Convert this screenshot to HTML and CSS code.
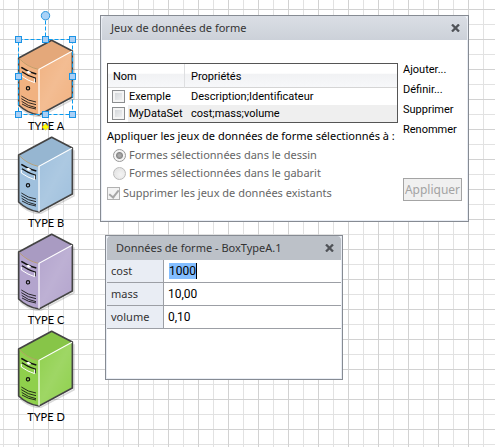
FILE: index.html
```html
<!DOCTYPE html>
<html lang="fr">
<head>
<meta charset="utf-8">
<meta name="viewport" content="width=device-width, initial-scale=1">
<title>Jeux de données de forme</title>
<link rel="stylesheet" href="styles.css">
</head>
<body>
<svg class="defs" aria-hidden="true">
  <defs>
    <linearGradient id="shine" x1="0" y1="0" x2="1" y2="1">
      <stop offset="0" stop-color="#fff" stop-opacity="0"/>
      <stop offset=".5" stop-color="#fff" stop-opacity=".14"/>
      <stop offset="1" stop-color="#fff" stop-opacity="0"/>
    </linearGradient>
    <symbol id="tower" viewBox="51 33 174 234">
      <path d="M60 238Q86 264 120 266L222 212V76" fill="none" stroke="#000" stroke-opacity=".15" stroke-width="5"/>
      <path d="M155 37L217 69V207L117 261Q82 256 56 231V90Z" fill="currentColor" stroke="#444" stroke-width="5" stroke-linejoin="round"/>
      <path d="M155 39L215 70L117 124Q84 117 58 91Z" fill="#000" fill-opacity=".05"/>
      <path d="M117 125L215 71V206L117 259Z" fill="url(#shine)"/>
      <path class="crest" d="M58 92Q82 117 115 124" fill="none" stroke-width="2.5"/>
      <path d="M117 260V124L216 70" fill="none" stroke="#fff" stroke-width="3.5"/>
      <path d="M64 118Q84 132 109 138" fill="none" stroke="#111" stroke-width="5"/>
      <path d="M78 131L86 128L94 135L85 137Z" fill="#fff"/>
      <path d="M66 131Q84 144 106 150V163" fill="none" stroke="#111" stroke-width="3.5"/>
      <path d="M64 135V144Q84 158 104 164V152" fill="none" stroke="#fff" stroke-width="3"/>
      <circle cx="84" cy="181" r="5" fill="none" stroke="#111" stroke-width="3.5"/>
      <path d="M64 204Q84 219 108 222M64 212Q84 227 108 230M65 220Q84 235 108 239M66 228Q84 240 108 243" fill="none" stroke="#111" stroke-width="2.6"/>
    </symbol>
    <symbol id="cross" viewBox="0 0 9 8">
      <path d="M1 .5L8 7.500M8 .5L1 7.500" fill="none" stroke="#505358" stroke-width="2.3"/>
    </symbol>
  </defs>
</svg>
<main class="canvas">
  <div class="shapes">
    <figure class="shape orange">
      <svg class="tower"><use href="#tower"/></svg>
      <figcaption>TYPE A</figcaption>
      <svg class="selection" viewBox="0 0 64 121" aria-hidden="true">
        <path d="M32 10V28M5 29H59V104H5Z" fill="none" stroke="#0a9cf0" stroke-width="1" stroke-dasharray="4 2" transform="translate(-.5 -.5)"/>
        <circle cx="31.500" cy="4.700" r="4.200" fill="#a9d2f7" stroke="#2a96de"/>
        <g fill="#a9cff5" stroke="#1a94e6">
          <rect x="1.500" y="25.500" width="6" height="6"/><rect x="28.500" y="25.500" width="6" height="6"/><rect x="55.500" y="25.500" width="6" height="6"/>
          <rect x="1.500" y="62.500" width="6" height="6"/><rect x="55.500" y="62.500" width="6" height="6"/>
          <rect x="1.500" y="100.500" width="6" height="6"/><rect x="28.500" y="100.500" width="6" height="6"/><rect x="55.500" y="100.500" width="6" height="6"/>
        </g>
        <path d="M31.500 113L35 116L31.500 119L28 116Z" fill="#ff0" stroke="#c8c800" stroke-width=".5"/>
      </svg>
    </figure>
    <figure class="shape blue"><svg class="tower"><use href="#tower"/></svg><figcaption>TYPE B</figcaption></figure>
    <figure class="shape violet"><svg class="tower"><use href="#tower"/></svg><figcaption>TYPE C</figcaption></figure>
    <figure class="shape green"><svg class="tower"><use href="#tower"/></svg><figcaption>TYPE D</figcaption></figure>
  </div>
  <div class="windows">
    <section class="window">
      <header class="titlebar">
        <h2>Jeux de données de forme</h2>
        <button class="close" type="button" aria-label="Fermer"><svg><use href="#cross"/></svg></button>
      </header>
      <form class="sets">
        <div class="sets-main">
          <table class="list">
            <thead><tr><th class="name">Nom</th><th>Propriétés</th></tr></thead>
            <tbody>
              <tr><td class="name"><label><input class="box" type="checkbox"><span>Exemple</span></label></td><td>Description;Identificateur</td></tr>
              <tr class="alt"><td class="name"><label><input class="box" type="checkbox"><span>MyDataSet</span></label></td><td>cost;mass;volume</td></tr>
            </tbody>
          </table>
          <fieldset class="apply">
            <legend>Appliquer les jeux de données de forme sélectionnés à :</legend>
            <label class="option"><input class="radio" type="radio" name="scope" checked disabled>Formes sélectionnées dans le dessin</label>
            <label class="option"><input class="radio" type="radio" name="scope" disabled>Formes sélectionnées dans le gabarit</label>
          </fieldset>
          <label class="remove"><input class="box" type="checkbox" checked disabled>Supprimer les jeux de données existants</label>
        </div>
        <div class="actions">
          <a href="#">Ajouter...</a>
          <a href="#">Définir...</a>
          <a href="#">Supprimer</a>
          <a href="#">Renommer</a>
          <button class="submit" type="button" disabled>Appliquer</button>
        </div>
      </form>
    </section>
    <section class="window data">
      <header class="titlebar">
        <h2>Données de forme - BoxTypeA.1</h2>
        <button class="close" type="button" aria-label="Fermer"><svg><use href="#cross"/></svg></button>
      </header>
      <form class="fields">
        <div class="field"><label for="cost">cost</label><div class="value"><input class="selected" id="cost" value="1000"></div></div>
        <div class="field"><label for="mass">mass</label><div class="value"><input id="mass" value="10,00"></div></div>
        <div class="field"><label for="volume">volume</label><div class="value"><input id="volume" value="0,10"></div></div>
      </form>
    </section>
  </div>
</main>
</body>
</html>
```
FILE: styles.css
```css
* { box-sizing: border-box; }

body {
  margin: 0;
  min-height: 100vh;
  background-color: #fff;
  background-image:
    linear-gradient(90deg, #d2d2d2 1px, transparent 1px),
    linear-gradient(#d2d2d2 1px, transparent 1px),
    linear-gradient(90deg, #e2e2e2 1px, transparent 1px),
    linear-gradient(#e2e2e2 1px, transparent 1px);
  background-size: 30px 30px;
  background-position: 18px 9px, 18px 9px, 3px 24px, 3px 24px;
  color: #000;
  font: 11px/16px "Noto Sans", sans-serif;
}

.defs { position: absolute; width: 0; height: 0; }

.canvas { display: flex; padding-right: 26px; }

.shapes { flex: 0 0 100px; padding: 39px 0 0 17px; }

.shape {
  position: relative;
  width: 58px;
  height: 97px;
  margin: 0;
  text-align: center;
}
.tower { display: block; width: 58px; height: 78px; }
.shape figcaption { padding-top: 1px; color: #000; font: 11px/16px Lato, sans-serif; }
.orange { color: #f1b281; }
.blue { color: #9fc0dd; }
.violet { color: #b3a4cd; }
.green { color: #8fd04c; }
.crest { stroke: #b79a68; }

.selection { position: absolute; left: -3px; top: -28px; width: 64px; height: 121px; }

.windows { flex: 1; min-width: 0; padding-top: 15px; }

.window {
  border: 1px solid #868b93;
  background: #fff;
  box-shadow: inset 0 0 0 1px #e9edf4;
}

.titlebar {
  display: flex;
  align-items: center;
  justify-content: space-between;
  height: 24px;
  margin: 0 1px;
  padding: 0 7px 0 9px;
  border-radius: 4px 4px 0 0;
  background: linear-gradient(#dadee5, #ccd1d9);
}
.titlebar h2 { margin: 0; color: #333; font-size: 11px; font-weight: 400; }
.close { display: flex; padding: 0; border: 0; background: none; }
.close svg { width: 9px; height: 8px; }

.sets {
  display: flex;
  gap: 5px;
  padding: 20px 6px;
}
.sets-main { flex: 1; min-width: 0; padding-top: 3px; }

.list {
  width: 100%;
  border: 1px solid #555;
  border-spacing: 0;
  background: #fff;
  font: 11px/16px Roboto, sans-serif;
}
.list th {
  height: 24px;
  padding: 2px 6px 0;
  border-bottom: 1px solid #d5d5d5;
  background: linear-gradient(#fff 40%, #f1f2f4 45%, #f7f8fa);
  font-weight: 400;
  text-align: left;
}
.list .name { width: 77px; }
.list th.name { padding-left: 5px; border-right: 1px solid #dedfe1; }
.list td { height: 17px; padding: 0 6px; }
.list td.name { padding: 0 0 0 4px; }
.list label { display: flex; align-items: center; gap: 4px; }
.list .alt td { background: #efefef; }
.list .alt .name { background: linear-gradient(90deg, #fff 20px, #efefef 20px); }

.box {
  appearance: none;
  flex: none;
  width: 13px;
  height: 13px;
  margin: 0;
  border: 1px solid #8b8d8f;
  background: linear-gradient(135deg, #ccd0d4, #f6f6f6);
  box-shadow: inset 0 0 0 2px #f4f4f4;
}
.box:checked {
  border-color: #b1b1b1;
  background: #f3f3f3;
  box-shadow: none;
}
.box:checked::before {
  content: "";
  display: block;
  width: 4px;
  height: 8px;
  margin: 0 auto;
  border: solid #a6a6a6;
  border-width: 0 2px 2px 0;
  transform: rotate(38deg);
}

.apply { margin: 0; padding: 0; border: 0; color: #666; }
.apply legend { padding: 5px 0 2px; color: #000; white-space: nowrap; }
.option { display: flex; align-items: center; gap: 3px; height: 18px; padding-left: 6px; white-space: nowrap; }
.radio {
  appearance: none;
  flex: none;
  width: 13px;
  height: 13px;
  margin: 0;
  border: 1px solid #bbb;
  border-radius: 50%;
  background: radial-gradient(circle at 60% 60%, #f4f4f4, #dedede);
}
.radio:checked {
  border-color: #999;
  background: radial-gradient(circle, #aaa 1px, #888 3px, #f4f4f4 4px);
}
.remove { display: flex; align-items: center; gap: 3px; padding-top: 3px; color: #666; white-space: nowrap; }

.actions { display: flex; flex: 0 0 59px; flex-direction: column; justify-content: flex-start; }
.actions a {
  color: #000;
  font: 11px/20px Roboto, sans-serif;
  text-decoration: none;
}
.submit {
  height: 23px;
  margin-top: auto;
  padding: 0;
  border: 1px solid #a4a4a4;
  background: #f0f0f0;
  color: #a3a3a3;
  font: 12px/16px "Noto Sans", sans-serif;
}

.data { max-width: 238px; min-height: 145px; margin: 13px 0 0 5px; }
.data .titlebar { background: #bcc1c8; }

.fields { margin: 0 1px; }
.field { display: flex; height: 23px; border-bottom: 1px solid #9c9fa5; }
.field label {
  flex: 0 0 57px;
  padding: 3px 4px;
  border-right: 1px solid #9c9fa5;
  background: #e9edf4;
  color: #333;
}
.value { flex: 1; min-width: 0; padding: 3px 4px; }
.value input {
  display: block;
  width: 100%;
  height: 16px;
  padding: 0;
  border: 0;
  outline: 0;
  background: none;
  color: #000;
  font: 12px/16px Roboto, sans-serif;
}
.value .selected { width: 28px; margin-left: 1px; border-right: 1px solid #000; background: #84beff; }
```
